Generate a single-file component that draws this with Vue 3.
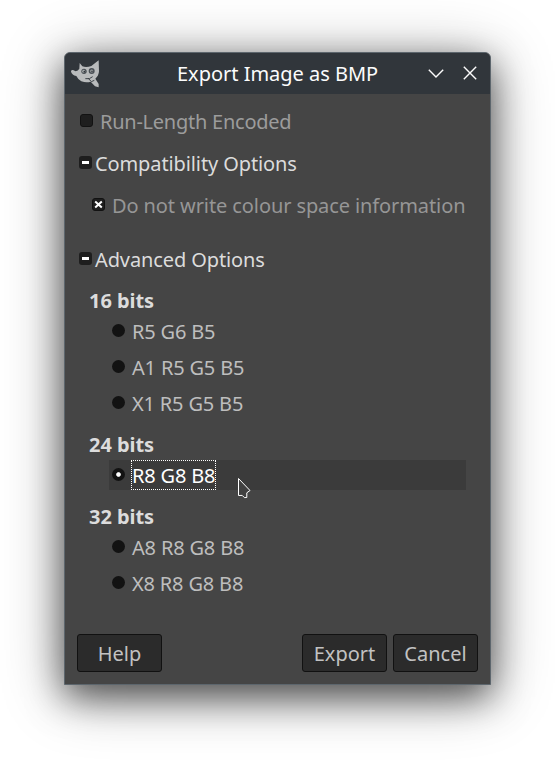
<script setup>
import { ref } from 'vue'

const selected = ref('R8 G8 B8')
const groups = [
  { title: '16 bits', formats: ['R5 G6 B5', 'A1 R5 G5 B5', 'X1 R5 G5 B5'] },
  { title: '24 bits', formats: ['R8 G8 B8'] },
  { title: '32 bits', formats: ['A8 R8 G8 B8', 'X8 R8 G8 B8'] },
]
</script>

<template>
  <main class="desktop">
    <section class="dialog">
      <header class="titlebar">
        <svg class="logo" viewBox="45 39 90 90">
          <path d="M48 77Q47 71 54 72L62 76Q69 75 73 68L74 51L82 61Q94 65 109 60L131 43L132 76Q131 90 121 98L131 114V124L120 121L107 107Q94 111 79 106Q68 99 64 90Q51 87 48 77Z" fill="#b9bbbc" />
          <circle cx="87" cy="76" r="8" fill="#4a5055" />
          <circle cx="110" cy="75" r="9" fill="#4a5055" />
          <circle cx="86" cy="76" r="4.5" fill="#a4a8aa" />
          <circle cx="110" cy="75" r="4.5" fill="#a4a8aa" />
          <circle cx="88" cy="77" r="2.5" fill="#31363b" />
          <circle cx="111" cy="76" r="2.5" fill="#31363b" />
          <path d="M91 98Q104 101 113 92M99 96L109 107L118 103" fill="none" stroke="#3c4247" stroke-width="3" />
        </svg>
        <h1 class="title">Export Image as BMP</h1>
        <div class="controls">
          <svg class="control" viewBox="0 0 16 16"><path d="M.8 4.7L8 11.9L15.2 4.7" /></svg>
          <svg class="control" viewBox="0 0 16 16"><path d="M1.8 1.8L14.2 14.2M14.2 1.8L1.8 14.2" /></svg>
        </div>
      </header>

      <div class="content">
        <div class="row disabled rle">
          <span class="box framed"></span><span>Run-Length Encoded</span>
        </div>
        <div class="row expander">
          <span class="box"><i class="minus"></i></span><span>Compatibility Options</span>
        </div>
        <div class="row disabled color-space">
          <span class="box framed">
            <svg class="cross" viewBox="0 0 9 9"><path d="M1.2 1.5L7.8 7.5M7.8 1.5L1.2 7.5" /></svg>
          </span>
          <span>Do not write colour space information</span>
        </div>
        <div class="row expander advanced">
          <span class="box"><i class="minus"></i></span><span>Advanced Options</span>
        </div>

        <div class="groups">
          <section v-for="group in groups" :key="group.title">
            <h2 class="heading">{{ group.title }}</h2>
            <div class="formats">
              <div
                v-for="format in group.formats"
                :key="format"
                class="format"
                :class="{ active: format === selected }"
                @click="selected = format"
              >
                <span class="radio"></span>
                <span class="format-label">{{ format }}</span>
                <svg v-if="format === selected" class="pointer" viewBox="0 0 16 24">
                  <path d="M1.5 2.5L13 14.5L9.8 16.8L9.8 21.5L7.4 21.6L5.2 19.4L1.5 19.5Z" />
                </svg>
              </div>
            </div>
          </section>
        </div>

        <footer class="actions">
          <button class="button help">Help</button>
          <button class="button">Export</button>
          <button class="button">Cancel</button>
        </footer>
      </div>
    </section>
  </main>
</template>

<style>
body {
  margin: 0;
  background: #fff;
}
</style>

<style scoped>
.desktop {
  box-sizing: border-box;
  width: 555px;
  height: 761px;
  padding: 52px 64px 76px;
  overflow: hidden;
  font: 20px/30px "Noto Sans", sans-serif;
  color: #dcdcdc;
}
.dialog {
  box-sizing: border-box;
  width: 427px;
  height: 633px;
  border: 1px solid #5d666d;
  border-radius: 6px 6px 0 0;
  background: #454545;
  box-shadow: 0 12px 36px rgba(0, 0, 0, 0.6), 0 8px 64px rgba(0, 0, 0, 0.32);
}
.titlebar {
  box-sizing: border-box;
  display: grid;
  grid-template-columns: 107px 1fr 107px;
  align-items: center;
  height: 41px;
  padding: 0 5px;
  border-radius: 5px 5px 0 0;
  background: #31363b;
  color: #fcfcfc;
}
.logo {
  width: 30px;
  height: 30px;
}
.title {
  margin: 0;
  font-size: 20px;
  font-weight: 400;
  letter-spacing: -0.02px;
  text-align: center;
  white-space: nowrap;
}
.controls {
  display: flex;
  justify-content: flex-end;
  gap: 18px;
  padding: 0 7px 1px 0;
}
.control {
  width: 16px;
  height: 16px;
  fill: none;
  stroke: #fcfcfc;
  stroke-width: 1.4;
}
.content {
  padding: 13px 12px 12px;
}
.row {
  display: flex;
  align-items: center;
  height: 30px;
  margin-bottom: 12px;
  letter-spacing: -0.11px;
  white-space: nowrap;
}
.disabled {
  color: #969696;
}
.rle {
  gap: 7px;
  padding-left: 3px;
  color: #9c9c9c;
  letter-spacing: -0.25px;
}
.expander {
  gap: 3px;
  padding-left: 2px;
}
.color-space {
  gap: 7px;
  padding-left: 15px;
  margin-bottom: 24px;
  letter-spacing: -0.1px;
}
.advanced {
  margin-bottom: 11px;
}
.box {
  box-sizing: border-box;
  display: flex;
  flex: none;
  align-items: center;
  justify-content: center;
  width: 13px;
  height: 13px;
  margin-bottom: 3px;
  border-radius: 3px;
  background: #1e1e1e;
}
.framed {
  border: 1px solid #121212;
}
.minus {
  width: 7px;
  height: 3px;
  background: #fff;
}
.cross {
  width: 9px;
  height: 9px;
  fill: none;
  stroke: #fff;
  stroke-width: 2;
}
.groups {
  display: grid;
  gap: 12px;
  padding-left: 12px;
}
.heading {
  height: 30px;
  margin: 0;
  font-size: 20px;
  font-weight: 700;
  letter-spacing: -0.05px;
}
.formats {
  display: grid;
  gap: 6px;
  width: 357px;
  margin-left: 20px;
}
.format {
  position: relative;
  display: flex;
  align-items: center;
  gap: 6px;
  height: 30px;
  padding-left: 3px;
  color: #bebebe;
}
.active {
  background: #3b3b3b;
  color: #fff;
}
.radio {
  box-sizing: border-box;
  width: 13px;
  height: 13px;
  margin-bottom: 2px;
  border-radius: 50%;
  background: #121212;
}
.active .radio {
  background: radial-gradient(circle, #fff 1.8px, #121212 2.8px);
}
.format-label {
  box-sizing: border-box;
  height: 30px;
  padding: 0 1px;
  line-height: 32px;
  letter-spacing: -0.17px;
  white-space: nowrap;
}
.active .format-label {
  width: 85px;
  padding: 0;
  border: 1px dotted #fff;
  line-height: 30px;
}
.pointer {
  position: absolute;
  left: 128px;
  top: 16px;
  width: 16px;
  height: 24px;
  fill: #404040;
  stroke: #fff;
  stroke-width: 1;
}
.actions {
  display: flex;
  gap: 6px;
  padding-top: 36px;
}
.button {
  box-sizing: border-box;
  width: 85px;
  height: 38px;
  padding: 2px 0 0;
  border: 1px solid #111;
  border-radius: 3px;
  background: #2b2b2b;
  color: #c2c2c2;
  font: 20px/34px "Noto Sans", sans-serif;
}
.help {
  margin-right: auto;
}
</style>
